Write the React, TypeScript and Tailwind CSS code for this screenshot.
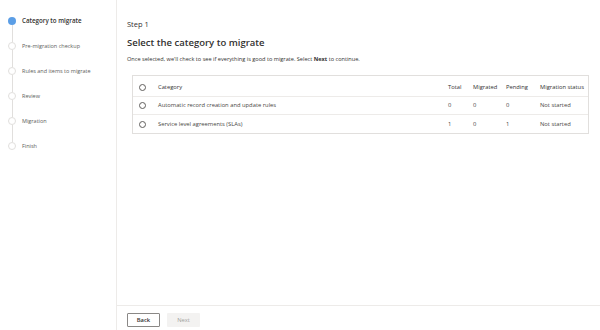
const steps = [
  "Category to migrate",
  "Pre-migration checkup",
  "Rules and items to migrate",
  "Review",
  "Migration",
  "Finish",
];

const rows = [
  { name: "Automatic record creation and update rules", total: 0, migrated: 0, pending: 0, status: "Not started" },
  { name: "Service level agreements (SLAs)", total: 1, migrated: 0, pending: 1, status: "Not started" },
];

function Radio() {
  return <span className="block w-[7px] h-[7px] rounded-full border border-[#605e5c] bg-white" />;
}

export default function App() {
  return (
    <div className="flex h-[330px] w-[600px] bg-white text-[#323130] font-['Open_Sans',sans-serif]">
      {/* sidebar stepper */}
      <aside className="w-[117px] shrink-0 border-r border-[#edebe9] pt-[16.5px] pl-[8px]">
        {steps.map((s, i) => (
          <div key={s} className="flex gap-[6px]">
            <div className="flex flex-col items-center w-[8px]">
              <span
                className={
                  i === 0
                    ? "block w-[8px] h-[8px] rounded-full bg-[#5b9ee6]"
                    : "block w-[8px] h-[8px] rounded-full border border-[#e1dfdd] bg-white"
                }
              />
              {i < steps.length - 1 && <span className="block w-px h-[17.2px] bg-[#e1dfdd]" />}
            </div>
            <div
              className={
                i === 0
                  ? "text-[6.2px] leading-[8px] font-semibold text-[#323130]"
                  : "text-[5.5px] leading-[8px] text-[#605e5c]"
              }
            >
              {s}
            </div>
          </div>
        ))}
      </aside>

      <main className="flex-1 flex flex-col">
        <div className="flex-1 pl-[10px] pr-[11px] pt-[19px]">
          <div className="text-[7.5px] leading-[10px]">Step 1</div>
          <h1 className="mt-[8px] text-[9.5px] leading-[12px] font-semibold">Select the category to migrate</h1>
          <p className="mt-[6px] text-[5.6px] leading-[8px] text-[#323130]">
            Once selected, we'll check to see if everything is good to migrate. Select <b>Next</b> to continue.
          </p>

          <div className="mt-[12px] ml-[5px] border border-[#e1dfdd] pt-[3px] text-[5.8px]">
            <div className="grid grid-cols-[25px_1fr_25px_33px_34px_48px] items-center h-[18px] border-b border-[#edebe9] font-medium">
              <div className="pl-[6px]"><Radio /></div>
              <div>Category</div>
              <div>Total</div>
              <div>Migrated</div>
              <div>Pending</div>
              <div>Migration status</div>
            </div>
            {rows.map((r, i) => (
              <div
                key={r.name}
                className={
                  "grid grid-cols-[25px_1fr_25px_33px_34px_48px] items-center h-[18px] text-[#484644]" +
                  (i < rows.length - 1 ? " border-b border-[#edebe9]" : "")
                }
              >
                <div className="pl-[6px]"><Radio /></div>
                <div>{r.name}</div>
                <div>{r.total}</div>
                <div>{r.migrated}</div>
                <div>{r.pending}</div>
                <div>{r.status}</div>
              </div>
            ))}
          </div>
        </div>

        <footer className="h-[25px] border-t border-[#edebe9] flex items-start gap-[7px] pl-[10px] pt-[7px]">
          <button className="w-[33px] h-[14px] border border-[#8a8886] rounded-[1px] bg-white text-[5.8px] font-semibold text-[#323130]">
            Back
          </button>
          <button className="w-[33px] h-[14px] rounded-[1px] bg-[#f3f2f1] text-[5.8px] text-[#a19f9d]">
            Next
          </button>
        </footer>
      </main>
    </div>
  );
}
